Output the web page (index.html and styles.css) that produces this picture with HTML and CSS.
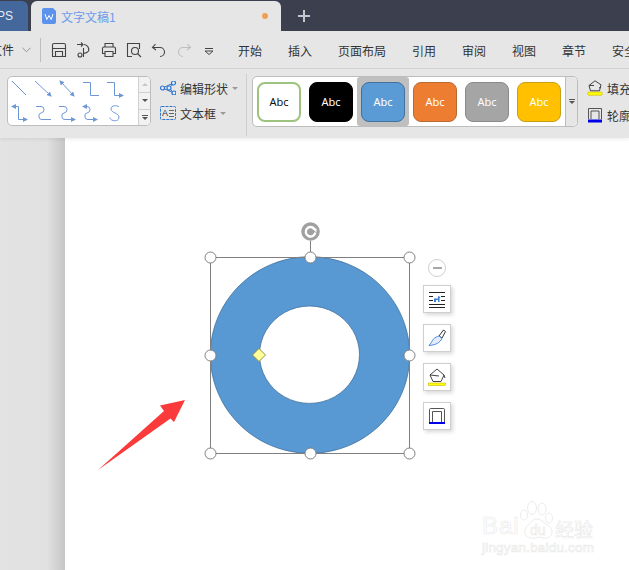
FILE: index.html
```html
<!DOCTYPE html>
<html lang="zh">
<head>
<meta charset="utf-8">
<title>文字文稿1</title>
<link rel="stylesheet" href="styles.css">
</head>
<body>
<div class="app">
  <header class="titlebar">
    <div class="tab-ps"><span>PS</span></div>
    <div class="tab-doc">
      <svg class="doc-icon" viewBox="0 0 14 16"><path d="M2 0h9l3 3v11a2 2 0 0 1-2 2H2a2 2 0 0 1-2-2V2a2 2 0 0 1 2-2z" fill="#5b92ee"/><path d="M3 6l1.800 5.500L7 7.500l2.200 4L11 6" fill="none" stroke="#fff" stroke-width="1"/></svg>
      <span class="doc-name">文字文稿1</span>
      <span class="doc-dot"></span>
    </div>
    <span class="plus"></span>
  </header>

  <nav class="menubar">
    <span class="file-label">文件</span>
    <svg class="chev" viewBox="0 0 10 6"><path d="M.5.500 5 5 9.500.5" fill="none" stroke="#8a8a8a"/></svg>
    <span class="vsep"></span>
    <div class="quick">
      <svg viewBox="0 0 16 16"><path d="M1.500 3a1.500 1.500 0 0 1 1.500-1.500h10a1.500 1.500 0 0 1 1.500 1.500v11.500h-13zM1.500 6.500h13M4.500 14.500v-5h7v5" fill="none" stroke="#444" stroke-width="1.100"/></svg>
      <svg viewBox="0 0 16 16"><path d="M1 2.500h6M5 .5l2 2-2 2M8 2.500a5 5 0 0 1 4.500 6.500 4.500 4.500 0 0 1-4.500 2M7.500 6v9" fill="none" stroke="#444" stroke-width="1.100"/><circle cx="4" cy="13" r="2" fill="none" stroke="#444" stroke-width="1.100"/></svg>
      <svg viewBox="0 0 16 16"><path d="M4 5V1.500h8V5M4 11.500H1.500V6.500a1.500 1.500 0 0 1 1.500-1.500h10a1.500 1.500 0 0 1 1.500 1.500v5H12M4 9.500h8v5H4z" fill="none" stroke="#444" stroke-width="1.100"/></svg>
      <svg viewBox="0 0 16 16"><path d="M6 14.500H1.500v-13h12V7" fill="none" stroke="#444" stroke-width="1.100"/><circle cx="9" cy="9" r="3.500" fill="none" stroke="#444" stroke-width="1.100"/><path d="M11.500 11.500l3.500 3.500" stroke="#444" stroke-width="1.100"/></svg>
      <svg viewBox="0 0 16 16"><path d="M4.500 2L1.500 5.500l3.500 2.500M2 5.500h7a4.500 4.500 0 0 1 0 9" fill="none" stroke="#444" stroke-width="1.100"/></svg>
      <svg viewBox="0 0 16 16"><path d="M11.500 2l3 3.500-3.500 2.500M14 5.500H7a4.500 4.500 0 0 0 0 9" fill="none" stroke="#bdbdbd" stroke-width="1.100"/></svg>
      <svg viewBox="0 0 16 16"><path d="M4 6.500h8M4 9l4 3.500L12 9z" fill="none" stroke="#444" stroke-width="1"/></svg>
    </div>
    <ul class="menu">
      <li>开始</li><li>插入</li><li>页面布局</li><li>引用</li><li>审阅</li><li>视图</li><li>章节</li><li>安全</li>
    </ul>
  </nav>

  <section class="ribbon">
    <div class="gallery">
      <svg class="lines" viewBox="0 0 130 48">
        <defs>
          <marker id="a" markerWidth="5" markerHeight="5" refX="4" refY="2.500" orient="auto" markerUnits="userSpaceOnUse"><path d="M0 0l5 2.500L0 5z" fill="#6f97d6"/></marker>
          <marker id="s" markerWidth="5" markerHeight="5" refX="1" refY="2.500" orient="auto" markerUnits="userSpaceOnUse"><path d="M5 0L0 2.500 5 5z" fill="#6f97d6"/></marker>
        </defs>
        <g fill="none" stroke="#6f97d6" stroke-width="1">
          <path d="M4 4l14 14"/>
          <path d="M27 4l16 15" marker-end="url(#a)"/>
          <path d="M52 4l14 15" marker-end="url(#a)" marker-start="url(#s)"/>
          <path d="M75 5.500h7.500v13h8.500"/>
          <path d="M99 5.500h7.500v13H115" marker-end="url(#a)"/>
          <path d="M4 29.500h6.500v13H19" marker-end="url(#a)" marker-start="url(#s)"/>
          <path d="M28 29.500h5q3 0 3 3t-3 3.500-2 4q0 2.500 3 2.500h9"/>
          <path d="M51 29.500h5q3 0 3 3t-3 3.500-2 4q0 2.500 3 2.500h10" marker-end="url(#a)"/>
          <path d="M75 29.500h4q3 0 3 3t-3 3.500-2 4q0 2.500 3 2.500h9" marker-end="url(#a)" marker-start="url(#s)"/>
          <path d="M111 30c-2-2-8-2-8 2s8 4 8 8-4 4-6 3.500-3-2-3-3"/>
        </g>
      </svg>
      <div class="spin">
        <span class="spin-btn"><i class="tri up"></i></span>
        <span class="spin-btn"><i class="tri down"></i></span>
        <span class="spin-btn more"><i class="bar"></i><i class="tri down"></i></span>
      </div>
    </div>

    <div class="shape-tools">
      <div class="tool">
        <svg class="tool-icon" viewBox="0 0 16 14"><path d="M2.500 7L13.500 2 9 7l5 5z" fill="none" stroke="#2f75cc" stroke-width="1"/><g fill="#e6eefa" stroke="#2f75cc" stroke-width="1.200"><circle cx="2.500" cy="7" r="2"/><circle cx="13.500" cy="2" r="2"/><circle cx="9" cy="7" r="2"/><circle cx="14" cy="12" r="2"/></g></svg>
        <span>编辑形状</span><i class="caret"></i>
      </div>
      <div class="tool">
        <svg class="tool-icon" viewBox="0 0 16 14"><rect x=".5" y=".5" width="15" height="13" rx="1" fill="none" stroke="#2f75cc" stroke-dasharray="3 1"/><text x="2" y="10" class="a-glyph">A</text><path d="M9 4.500h5M9 7.500h5M9 10.500h5" stroke="#666"/></svg>
        <span>文本框</span><i class="caret"></i>
      </div>
    </div>

    <span class="rsep"></span>

    <div class="styles">
      <div class="swatches">
        <div class="cell"><span class="sw sw-white">Abc</span></div>
        <div class="cell"><span class="sw sw-black">Abc</span></div>
        <div class="cell cell-on"><span class="sw sw-blue">Abc</span></div>
        <div class="cell"><span class="sw sw-orange">Abc</span></div>
        <div class="cell"><span class="sw sw-gray">Abc</span></div>
        <div class="cell"><span class="sw sw-yellow">Abc</span></div>
      </div>
      <div class="styles-more"><i class="bar"></i><i class="tri down"></i></div>
    </div>

    <div class="fills">
      <div class="fill-row">
        <svg class="fill-icon" viewBox="0 0 16 16"><path d="M8 .8l6 4-1.500 6h-9L2 5.500z" fill="none" stroke="#444"/><path d="M2 5.500h5M12 8l2-1" stroke="#444"/><rect x=".8" y="12" width="14.400" height="3.200" rx="1" fill="#ffff00" stroke="#c9b400" stroke-width=".6"/></svg>
        <span>填充</span>
      </div>
      <div class="fill-row">
        <svg class="fill-icon" viewBox="0 0 16 16"><path d="M1.500 12V1.500h13V12M4 12V4h8v8" fill="none" stroke="#555"/><rect x="1" y="12.500" width="14" height="3" fill="#0000e6"/></svg>
        <span>轮廓</span>
      </div>
    </div>
  </section>

  <main class="workspace">
    <div class="page">
      <div class="canvas">
        <svg class="drawing" viewBox="0 0 629 570" aria-hidden="true">
          <path d="M310 256.700a99.700 98.300 0 1 0 .01 0zM309.500 306a50 48.700 0 1 1-.01 0z" fill="#5898d3" fill-rule="evenodd" stroke="#41719c" stroke-width=".8"/>
          <rect x="210.500" y="257.500" width="199" height="196" fill="none" stroke="#7f7f7f"/>
          <path d="M310.500 241v16" stroke="#7f7f7f"/>
          <circle cx="310.500" cy="231.500" r="9.300" fill="#a0a0a0"/>
          <path d="M314.500 229a4.800 4.800 0 1 0 .8 3.500" fill="none" stroke="#fff" stroke-width="2.400"/>
          <path d="M312 228.500h4.500v4z" fill="#fff"/>
          <g fill="#fff" stroke="#7f7f7f">
            <circle cx="210.500" cy="257.500" r="5.500"/><circle cx="310.500" cy="257.500" r="5.500"/><circle cx="409.500" cy="257.500" r="5.500"/>
            <circle cx="210.500" cy="355.500" r="5.500"/><circle cx="409.500" cy="355.500" r="5.500"/>
            <circle cx="210.500" cy="453.500" r="5.500"/><circle cx="310.500" cy="453.500" r="5.500"/><circle cx="409.500" cy="453.500" r="5.500"/>
          </g>
          <path d="M259 348.500l6.500 6.500-6.500 6.500-6.500-6.500z" fill="#ffff99" stroke="#8f8f50"/>
          <path d="M98 470L164 411l-4-5.500L185 400l-11 22-3.500-3.500z" fill="#fb3b3b"/>
          <g fill="#fff" stroke="#ececec" stroke-width="1">
            <ellipse cx="532" cy="508" rx="4.500" ry="6.500"/><ellipse cx="524" cy="515" rx="3.500" ry="5"/><ellipse cx="542" cy="509" rx="4" ry="6"/><ellipse cx="549" cy="518" rx="3.500" ry="5"/>
            <path d="M537 519c-4 0-6 3-9 6-2 2-4 5-3 8 1 4 5 6 10 5 3-1 5-1 8 0 5 1 9-2 9-6s-3-6-6-8c-3-2-5-5-9-5z"/>
          </g>
        </svg>
        <span class="wm-baidu">Bai</span>
        <span class="wm-du">du</span>
        <span class="wm-jy">经验</span>
        <span class="wm-url">jingyan.baidu.com</span>
      </div>
      <aside class="quick-side">
        <span class="collapse"><i></i></span>
        <span class="side-btn">
          <svg viewBox="0 0 18 18"><path d="M1 2.500h16M1 6.500h4M13 6.500h4M1 10.500h4M13 10.500h4M1 14.500h16M1 17.500h16" stroke="#222" stroke-width="1" fill="none"/><path d="M6 12V8.500h4V6l2.500 1-1 1.200V12H10v-2H8v2z" fill="#3f7fd0"/></svg>
        </span>
        <span class="side-btn">
          <svg viewBox="0 0 18 18"><path d="M11 7l4.500-6 2 1.500L14 9z" fill="#fff" stroke="#333"/><path d="M11 7l3 2.500c-2 4-6 6.500-13 7 2-2 3-4.500 4.500-6.500 1.500-1.500 3.500-2.500 5.500-3z" fill="#e3edfb" stroke="#4f8ae0"/></svg>
        </span>
        <span class="side-btn">
          <svg viewBox="0 0 18 18"><path d="M9 1l7 6-3 6.500H5L2 7z" fill="none" stroke="#444"/><path d="M2 7l9 1M16 7l1 3" stroke="#444" fill="none"/><rect x=".5" y="15" width="17" height="2.500" fill="#ffff00" stroke="#bfa800" stroke-width=".5"/></svg>
        </span>
        <span class="side-btn">
          <svg viewBox="0 0 18 18"><path d="M1.500 15V2.500a1 1 0 0 1 1-1h13a1 1 0 0 1 1 1V15M4.500 15V4.500h9V15" fill="none" stroke="#555"/><rect x="1" y="15" width="16" height="2" fill="#0000e6"/></svg>
        </span>
      </aside>
    </div>
  </main>
</div>
</body>
</html>
```
FILE: styles.css
```css
* { box-sizing: border-box; }
html, body { margin: 0; padding: 0; }
body { width: 629px; height: 570px; overflow: hidden; font-family: "Noto Sans CJK SC", "Liberation Sans", sans-serif; background: #e4e4e4; }
.app { width: 629px; height: 570px; display: flex; flex-direction: column; overflow: hidden; }

.titlebar { flex: 0 0 31px; height: 31px; background: #3c404e; display: flex; align-items: flex-end; }
.tab-ps { width: 28px; height: 30px; background: #44679c; color: #e6ecf5; font: 12px "Liberation Sans", sans-serif; display: flex; align-items: center; justify-content: flex-end; padding-right: 15px; border-radius: 0 6px 0 0; overflow: hidden; margin-right: 3px; flex: none; }
.tab-doc { width: 250px; height: 30px; background: #e6e6e6; border-radius: 6px 6px 0 0; display: flex; align-items: center; padding: 0 13px 0 11px; flex: none; }
.doc-icon { width: 14px; height: 16px; flex: none; }
.doc-name { margin-left: 5px; font-size: 12px; color: #6b9bea; flex: 1; white-space: nowrap; }
.doc-dot { width: 6px; height: 6px; border-radius: 50%; background: #eca154; }
.plus { width: 12px; height: 12px; margin: 0 0 9px 17px; flex: none; background: linear-gradient(#c4c6cc, #c4c6cc) center / 12px 2px no-repeat, linear-gradient(#c4c6cc, #c4c6cc) center / 2px 12px no-repeat; }

.menubar { flex: 0 0 38px; height: 38px; background: #e6e6e6; border-bottom: 1px solid #d2d2d2; display: flex; align-items: center; font-size: 12px; color: #333; white-space: nowrap; overflow: hidden; }
.file-label { margin-left: -10px; width: 32px; flex: none; color: #333; }
.chev { width: 9px; height: 6px; flex: none; }
.vsep { width: 1px; height: 24px; background: #bdbdbd; margin: 0 10px 0 9px; flex: none; }
.quick { display: flex; gap: 9px; align-items: center; flex: none; }
.quick svg { width: 16px; height: 16px; display: block; }
.menu { list-style: none; display: flex; gap: 26px; margin: 2px 0 0 21px; padding: 0; flex: none; }
.menu li { flex: none; }

.ribbon { flex: 0 0 69px; height: 69px; background: #e6e6e6; display: flex; align-items: flex-start; padding: 7px 0 0 7px; box-shadow: 0 2px 3px rgba(0, 0, 0, .06); position: relative; z-index: 1; }
.gallery { width: 144px; height: 50px; flex: none; background: #fff; border: 1px solid #bdbdbd; border-radius: 5px; display: flex; overflow: hidden; }
.lines { width: 130px; height: 48px; flex: none; display: block; }
.spin { display: flex; flex-direction: column; border-left: 1px solid #d0d0d0; flex: 1; background: #f2f2f2; }
.spin-btn { flex: 1; display: flex; flex-direction: column; align-items: center; justify-content: center; gap: 1px; border-bottom: 1px solid #d0d0d0; }
.spin-btn:last-child { border-bottom: 0; }
.tri { width: 0; height: 0; border-left: 3px solid transparent; border-right: 3px solid transparent; display: block; }
.tri.up { border-bottom: 3px solid #c8c8c8; }
.tri.down { border-top: 3px solid #555; }
.bar { display: block; width: 6px; height: 1px; background: #555; }

.shape-tools { width: 85px; flex: none; margin-left: 9px; font-size: 12px; color: #333; display: flex; flex-direction: column; gap: 7px; padding-top: 3px; }
.tool { display: flex; align-items: center; height: 18px; white-space: nowrap; }
.tool-icon { width: 16px; height: 14px; flex: none; margin-right: 4px; }
.a-glyph { font: 9px "Liberation Sans", sans-serif; fill: #333; }
.caret { width: 0; height: 0; margin-left: 4px; border-left: 3px solid transparent; border-right: 3px solid transparent; border-top: 3px solid #999; }
.rsep { width: 1px; height: 62px; background: #cfcfcf; flex: none; margin: -2px 5px 0 1px; }

.styles { width: 326px; height: 51px; flex: none; background: #fff; border: 1px solid #bdbdbd; border-radius: 5px; display: flex; }
.swatches { flex: 1; display: flex; align-items: center; }
.cell { width: 52px; height: 49px; display: flex; align-items: center; justify-content: center; flex: none; }
.cell-on { background: #bfbfbf; border-radius: 3px; }
.sw { width: 44px; height: 40px; border-radius: 8px; font: 11px "Noto Sans", sans-serif; display: flex; align-items: center; justify-content: center; border: 1px solid; color: #fff; }
.sw-white { background: #fff; border: 2px solid #9dc37f; color: #111; }
.sw-black { background: #000; border-color: #000; }
.sw-blue { background: #5b9bd5; border-color: #41719c; }
.sw-orange { background: #ed7d31; border-color: #b86a34; }
.sw-gray { background: #a5a5a5; border-color: #8a8a8a; }
.sw-yellow { background: #ffc000; border-color: #c99f17; }
.styles-more { width: 12px; flex: none; background: #e6e6e6; border-left: 1px solid #bdbdbd; display: flex; flex-direction: column; align-items: center; justify-content: center; gap: 1px; border-radius: 0 5px 5px 0; }

.fills { flex: none; margin-left: 9px; font-size: 12px; color: #333; display: flex; flex-direction: column; gap: 9px; padding-top: 3px; white-space: nowrap; }
.fill-row { display: flex; align-items: center; height: 18px; gap: 4px; }
.fill-icon { width: 16px; height: 16px; flex: none; }

.workspace { flex: 1; min-height: 0; background: linear-gradient(to right, #e3e3e3 0, #e1e1e1 47px, #c6c6c6 65px); padding-left: 65px; }
.page { width: 564px; height: 100%; background: #fff; position: relative; }
.canvas { position: absolute; left: -65px; top: -138px; width: 629px; height: 570px; }
.drawing { position: absolute; left: 0; top: 0; width: 629px; height: 570px; display: block; }
.wm-baidu, .wm-du, .wm-jy, .wm-url { position: absolute; color: #fff; font-family: "Liberation Sans", sans-serif; white-space: nowrap; -webkit-text-stroke: .6px #e9e9e9; }
.wm-baidu { left: 482px; top: 512px; font-size: 24px; line-height: 28px; letter-spacing: 1px; }
.wm-du { left: 530px; top: 522px; font-size: 14px; line-height: 16px; }
.wm-jy { left: 555px; top: 516px; font-size: 19px; line-height: 26px; font-family: "Noto Sans CJK SC", sans-serif; }
.wm-url { left: 482px; top: 539px; font-size: 13.500px; line-height: 18px; letter-spacing: .2px; }

.quick-side { position: absolute; left: 358px; top: 121px; width: 28px; display: flex; flex-direction: column; align-items: center; gap: 11px; }
.collapse { width: 18px; height: 18px; border-radius: 50%; border: 1px solid #cfcfcf; background: #fff; display: flex; align-items: center; justify-content: center; margin-bottom: -3px; }
.collapse i { width: 9px; height: 2px; background: #a8a8a8; display: block; }
.side-btn { width: 28px; height: 28px; background: #fff; border: 1px solid #cfcfcf; box-shadow: 2px 2px 4px #d8d8d8; display: flex; align-items: center; justify-content: center; }
.side-btn svg { width: 18px; height: 18px; display: block; }
```
